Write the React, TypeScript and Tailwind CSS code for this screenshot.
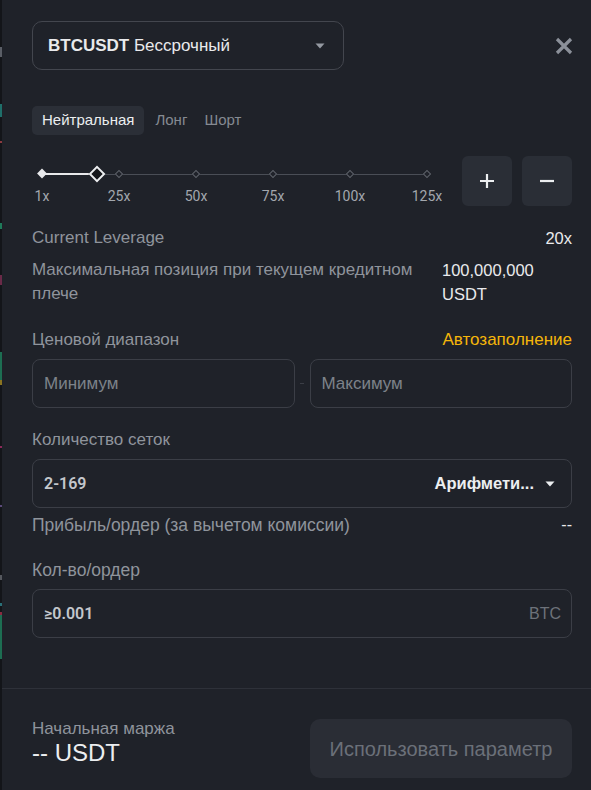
import React from "react";

const marks = [
  { label: "1x", x: 10 },
  { label: "25x", x: 87 },
  { label: "50x", x: 164 },
  { label: "75x", x: 241 },
  { label: "100x", x: 318 },
  { label: "125x", x: 395 },
];

function Caret({ className }: { className?: string }) {
  return (
    <svg width="10" height="6" viewBox="0 0 10 6" className={className}>
      <path d="M0.5 0.5 L9.5 0.5 L5 5.5 Z" fill="currentColor" />
    </svg>
  );
}

function LeftStrip() {
  return (
    <div className="w-[2px] h-full bg-[#131519] flex flex-col shrink-0">
      <div className="h-[47px]" />
      <div className="h-[10px] bg-[#5a5e66]" />
      <div className="h-[47px]" />
      <div className="h-[13px] bg-[#1f6f6a]" />
      <div className="h-[24px]" />
      <div className="h-[2px] bg-[#8a3a40]" />
      <div className="h-[80px]" />
      <div className="h-[6px] bg-[#1f7a5a]" />
      <div className="h-[46px]" />
      <div className="h-[10px] bg-[#6a2a48]" />
      <div className="h-[67px]" />
      <div className="h-[28px] bg-[#1d6e52]" />
      <div className="h-[5px] bg-[#8a7420]" />
      <div className="h-[61px]" />
      <div className="h-[2px] bg-[#8a2a5a]" />
      <div className="h-[57px]" />
      <div className="h-[2px] bg-[#5a4a7a]" />
      <div className="h-[68px]" />
      <div className="h-[5px] bg-[#55585e]" />
      <div className="h-[23px]" />
      <div className="h-[3px] bg-[#2a7078]" />
      <div className="h-[6px]" />
      <div className="h-[3px] bg-[#8a2a40]" />
      <div className="h-[44px] bg-[#1d6e52]" />
    </div>
  );
}

function Slider() {
  const handleX = 65;
  return (
    <div className="relative flex-1 h-[50px] font-['Roboto',sans-serif]">
      <div
        className="absolute top-[17.5px] h-px bg-[#4a4e56]"
        style={{ left: handleX, width: 395 - handleX }}
      />
      <div
        className="absolute top-[17px] h-[2px] bg-[#e8e9eb]"
        style={{ left: 10, width: handleX - 10 }}
      />
      {marks.map((m, i) => (
        <React.Fragment key={m.label}>
          {i === 0 ? (
            <div
              className="absolute top-[14px] w-[7px] h-[7px] rotate-45 bg-[#e8e9eb] -translate-x-1/2"
              style={{ left: m.x }}
            />
          ) : (
            <div
              className="absolute top-[15px] w-[6px] h-[6px] rotate-45 bg-[#1f2229] border border-[#5e626a] -translate-x-1/2"
              style={{ left: m.x }}
            />
          )}
          <div
            className="absolute top-[31px] text-[14px] leading-[18px] text-[#a3a7ae] -translate-x-1/2"
            style={{ left: m.x }}
          >
            {m.label}
          </div>
        </React.Fragment>
      ))}
      <div
        className="absolute top-[12px] w-[12px] h-[12px] rotate-45 bg-[#15171b] border-2 border-[#eceef0] -translate-x-1/2"
        style={{ left: handleX }}
      />
    </div>
  );
}

export default function App() {
  return (
    <div className="w-[591px] h-[790px] flex bg-[#1f2229] overflow-hidden font-['Liberation_Sans',Arial,sans-serif] text-[17px]">
      <LeftStrip />
      <div className="flex-1 flex flex-col h-full">
        <div className="pl-[30px] pr-[19px] flex flex-col">
          {/* header */}
          <div className="mt-[21px] flex items-center justify-between">
            <div className="w-[312px] h-[49px] rounded-[10px] border border-[#43464e] flex items-center justify-between pl-[15px] pr-[18px]">
              <div className="text-[17px] text-[#e9eaec]">
                <span className="font-bold">BTCUSDT</span> Бессрочный
              </div>
              <Caret className="text-[#959aa2]" />
            </div>
            <svg width="18" height="18" viewBox="0 0 18 18" className="mr-[-1px]">
              <path d="M2 2 L16 16 M16 2 L2 16" stroke="#8b9099" strokeWidth="3.2" strokeLinecap="butt" />
            </svg>
          </div>

          {/* tabs */}
          <div className="mt-[36px] flex items-center text-[15px]">
            <div className="h-[29px] px-[10px] rounded-[5px] bg-[#2b2f37] text-[#eceef0] flex items-center">
              Нейтральная
            </div>
            <div className="ml-[11px] text-[#858a92]">Лонг</div>
            <div className="ml-[17px] text-[#858a92]">Шорт</div>
          </div>

          {/* slider row */}
          <div className="mt-[21px] flex items-start gap-[10px]">
            <Slider />
            <div className="flex gap-[10px]">
              <div className="w-[50px] h-[50px] rounded-[6px] bg-[#2a2e36] flex items-center justify-center">
                <svg width="16" height="16" viewBox="0 0 16 16">
                  <path d="M8 1 V15 M1 8 H15" stroke="#eceef0" strokeWidth="2.2" />
                </svg>
              </div>
              <div className="w-[50px] h-[50px] rounded-[6px] bg-[#2a2e36] flex items-center justify-center">
                <svg width="16" height="16" viewBox="0 0 16 16">
                  <path d="M1 8 H15" stroke="#eceef0" strokeWidth="2.2" />
                </svg>
              </div>
            </div>
          </div>

          {/* current leverage */}
          <div className="mt-[20px] flex justify-between leading-[24px]">
            <span className="text-[#8f949c]">Current Leverage</span>
            <span className="text-[16.5px] text-[#e9eaec]">20x</span>
          </div>

          <div className="mt-[8px] flex justify-between leading-[24px]">
            <span className="text-[#8f949c] w-[405px]">
              Максимальная позиция при текущем кредитном плече
            </span>
            <span className="text-[16.5px] text-[#e9eaec] w-[130px]">100,000,000 USDT</span>
          </div>

          {/* price range */}
          <div className="mt-[22px] flex justify-between leading-[24px]">
            <span className="text-[#8f949c]">Ценовой диапазон</span>
            <span className="text-[#f5b60a]">Автозаполнение</span>
          </div>
          <div className="mt-[7px] flex items-center">
            <div className="flex-1 h-[49px] rounded-[8px] border border-[#3b3e46] flex items-center px-[11px] text-[#7d828a]">
              Минимум
            </div>
            <div className="w-[15px] flex justify-center">
              <div className="w-[4px] h-px bg-[#3b3e46]" />
            </div>
            <div className="flex-1 h-[49px] rounded-[8px] border border-[#3b3e46] flex items-center px-[11px] text-[#7d828a]">
              Максимум
            </div>
          </div>

          {/* grid count */}
          <div className="mt-[20px] leading-[24px] text-[#8f949c]">Количество сеток</div>
          <div className="mt-[7px] h-[49px] rounded-[8px] border border-[#3b3e46] flex items-center justify-between pl-[11px] pr-[16px]">
            <span className="font-['Roboto',sans-serif] font-semibold text-[16px] text-[#c4c7cc]">2-169</span>
            <span className="flex items-center gap-[11px] text-[16.5px] text-[#eceef0] font-bold">
              Арифмети...
              <Caret className="text-[#eceef0]" />
            </span>
          </div>
          <div className="mt-[5px] flex justify-between leading-[24px]">
            <span className="text-[17.5px] text-[#8f949c]">Прибыль/ордер (за вычетом комиссии)</span>
            <span className="text-[16px] text-[#e9eaec]">--</span>
          </div>

          {/* qty */}
          <div className="mt-[21px] leading-[24px] text-[17.5px] text-[#8f949c]">Кол-во/ордер</div>
          <div className="mt-[7px] h-[49px] rounded-[8px] border border-[#3b3e46] flex items-center justify-between pl-[11px] pr-[10px]">
            <span className="font-['Roboto',sans-serif] font-semibold text-[16px] text-[#c4c7cc]">≥0.001</span>
            <span className="text-[16px] text-[#6d727a]">BTC</span>
          </div>
        </div>

        {/* footer */}
        <div className="mt-auto border-t border-[#2e3139] h-[102px] pl-[30px] pr-[19px] pt-[30px] flex justify-between items-start">
          <div className="flex flex-col">
            <span className="text-[17px] leading-[20px] text-[#8f949c]">Начальная маржа</span>
            <span className="text-[24px] leading-[28px] text-[#eceef0]">-- USDT</span>
          </div>
          <div className="w-[262px] h-[59px] rounded-[10px] bg-[#2a2d35] flex items-center justify-center text-[20px] text-[#6b7079]">
            Использовать параметр
          </div>
        </div>
      </div>
    </div>
  );
}
